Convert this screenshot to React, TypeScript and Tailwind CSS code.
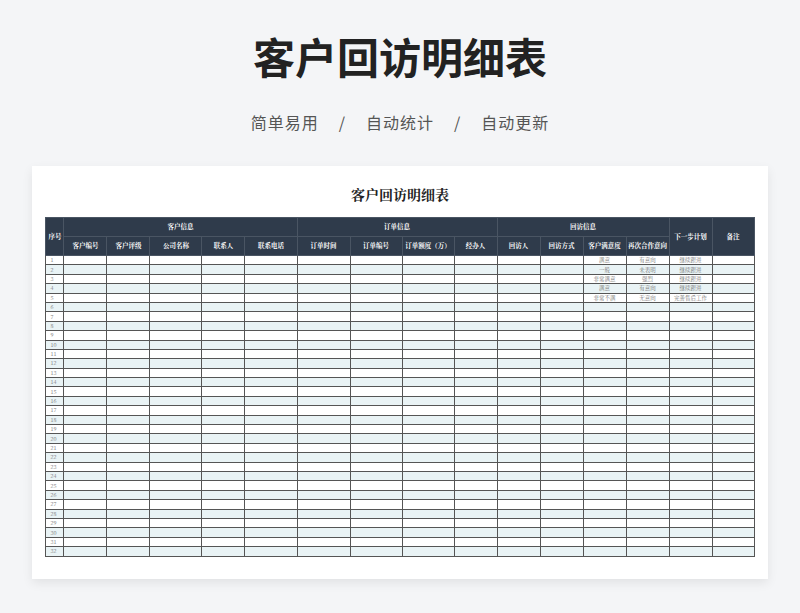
const cols = [18, 43, 43, 52, 43, 52, 53, 52, 52, 43, 43, 43, 43, 43, 43, 42];
const sub = ["客户编号","客户评级","公司名称","联系人","联系电话","订单时间","订单编号","订单额度（万）","经办人","回访人","回访方式","客户满意度","再次合作意向"];
const data: Record<number,string[]> = {
  1:["满意","有意向","继续跟进"],2:["一般","未表明","继续跟进"],3:["非常满意","强烈","继续跟进"],4:["满意","有意向","继续跟进"],5:["非常不满","无意向","完善售后工作"],
};
export default function App(){
  const rows = Array.from({length:32},(_,i)=>i+1);
  const th = "border border-[#4a5563] bg-[#2f3b4b] text-white text-[6.5px] font-bold text-center p-0";
  return (
    <div className="w-[800px] h-[613px] bg-[#f4f5f7] flex flex-col items-center" style={{fontFamily:'"Noto Serif CJK SC","Noto Sans CJK SC",serif'}}>
      <h1 className="mt-[28px] h-[56px] text-[42px] leading-[56px] font-bold text-[#222]" style={{fontFamily:'"Noto Sans CJK SC",sans-serif'}}>客户回访明细表</h1>
      <div className="mt-[26px] text-[16px] text-[#555] tracking-[1px] flex gap-[20px]" style={{fontFamily:'"Noto Sans CJK SC",sans-serif'}}>
        <span>简单易用</span><span>/</span><span>自动统计</span><span>/</span><span>自动更新</span>
      </div>
      <div className="mt-[32px] w-[736px] h-[413px] bg-white shadow-[0_4px_10px_rgba(0,0,0,0.08)] flex flex-col items-center">
        <div className="mt-[18px] h-[23px] text-[14px] font-bold text-[#222]">客户回访明细表</div>
        <table className="mt-[10px] border-collapse table-fixed w-[708px]">
          <colgroup>{cols.map((w,i)=><col key={i} style={{width:w}}/>)}</colgroup>
          <thead>
            <tr className="h-[19px]">
              <th rowSpan={2} className={th}>序号</th>
              <th colSpan={5} className={th}>客户信息</th>
              <th colSpan={4} className={th}>订单信息</th>
              <th colSpan={4} className={th}>回访信息</th>
              <th rowSpan={2} className={th}>下一步计划</th>
              <th rowSpan={2} className={th}>备注</th>
            </tr>
            <tr className="h-[19px]">{sub.map(s=><th key={s} className={th+" whitespace-nowrap"}>{s}</th>)}</tr>
          </thead>
          <tbody>
            {rows.map(r=>(
              <tr key={r} className={"h-[9.4px] "+(r%2===0?"bg-[#e9f3f5]":"bg-white")}>
                {cols.map((_,c)=>{
                  let t = "";
                  if(c===0) t=String(r);
                  if(data[r]){ if(c===12) t=data[r][0]; if(c===13) t=data[r][1]; if(c===14) t=data[r][2]; }
                  return <td key={c} className={"border border-[#555] p-0 text-[5.5px] leading-[8px] text-[#777] whitespace-nowrap overflow-hidden "+(c===0?"text-left pl-[4px]":"text-center")}>{t}</td>;
                })}
              </tr>
            ))}
          </tbody>
        </table>
      </div>
    </div>
  );
}
